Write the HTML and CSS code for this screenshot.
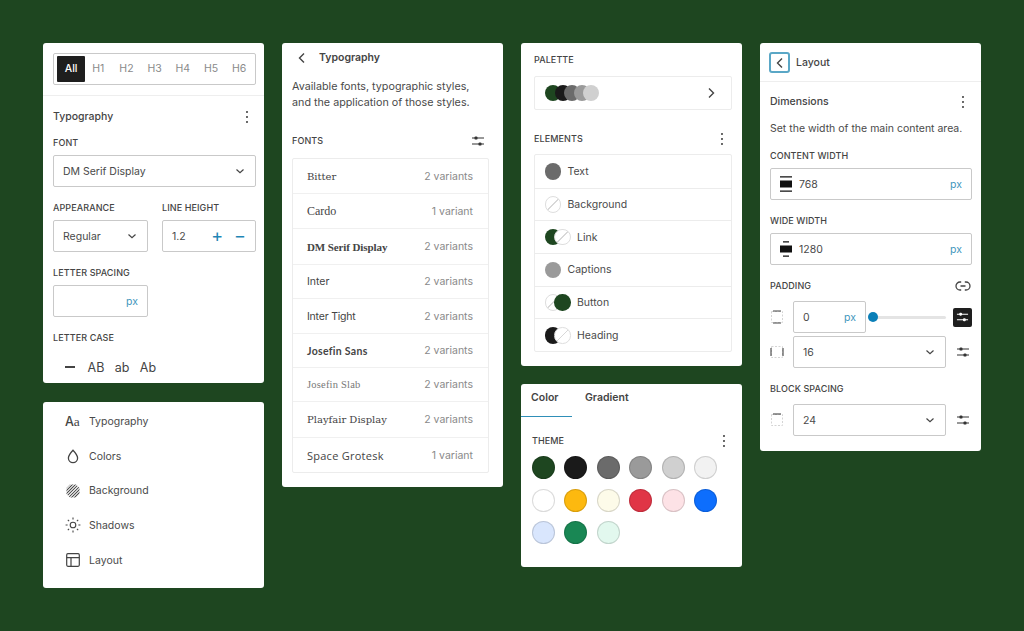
FILE: index.html
```html
<!DOCTYPE html>
<html lang="en">
<head>
<meta charset="utf-8">
<title>Global styles panels</title>
<link rel="stylesheet" href="styles.css">
</head>
<body>
<svg class="defs" aria-hidden="true">
  <symbol id="kebab" viewBox="0 0 16 16"><circle cx="8" cy="3" r="1.050"/><circle cx="8" cy="8" r="1.050"/><circle cx="8" cy="13" r="1.050"/></symbol>
  <symbol id="down" viewBox="0 0 12 12"><path d="M2.5 4.5 6 7.7l3.5-3.2" fill="none" stroke="currentColor" stroke-width="1.2"/></symbol>
  <symbol id="back" viewBox="0 0 12 12"><path d="M8 1.5 3.500 6 8 10.500" fill="none" stroke="currentColor" stroke-width="1.4"/></symbol>
  <symbol id="next" viewBox="0 0 12 12"><path d="M4 1.5 8.500 6 4 10.500" fill="none" stroke="currentColor" stroke-width="1.4"/></symbol>
  <symbol id="sliders" viewBox="0 0 14 12"><path d="M1 3h12M1 9h12" stroke="currentColor" stroke-width="1.200" fill="none"/><rect x="3.500" y="1.400" width="3" height="3.200" rx="1.200" fill="currentColor"/><rect x="7.500" y="7.400" width="3" height="3.200" rx="1.200" fill="currentColor"/></symbol>
  <symbol id="drop" viewBox="0 0 16 16"><path d="M8 2.200S3.400 7 3.400 10.100a4.600 4.600 0 0 0 9.200 0C12.600 7 8 2.200 8 2.200Z" fill="none" stroke="currentColor" stroke-width="1.300"/></symbol>
  <symbol id="hatch" viewBox="0 0 16 16"><clipPath id="hatch-clip"><path d="M5 1.500h6l3.500 3.500v6L11 14.500H5L1.500 11V5Z"/></clipPath><g clip-path="url(#hatch-clip)" stroke="currentColor" stroke-width="1.050"><path d="M-2 5 5-2M-2 8 8-2M-1 10 10-1M0 12 12 0M1 14 14 1M3 15 15 3M5 16 16 5M8 16 16 8"/></g></symbol>
  <symbol id="sun" viewBox="0 0 16 16"><circle cx="8" cy="8" r="2.800" fill="none" stroke="currentColor" stroke-width="1.100"/><path d="M8 .6v2M8 13.400v2M.6 8h2M13.400 8h2M2.800 2.800l1.300 1.300M11.900 11.900l1.300 1.300M2.800 13.200l1.300-1.300M11.900 4.100l1.300-1.300" stroke="currentColor" stroke-width="1.100"/></symbol>
  <symbol id="layout" viewBox="0 0 16 16"><rect x="1.700" y="1.700" width="12.600" height="12.600" rx="1.200" fill="none" stroke="currentColor" stroke-width="1.200"/><path d="M1.700 5.600h12.600M6 5.600v8.700" fill="none" stroke="currentColor" stroke-width="1.200"/></symbol>
  <symbol id="link" viewBox="0 0 16 12"><path d="M6.200 2H5a4 4 0 0 0 0 8h1.200M9.800 2H11a4 4 0 0 1 0 8H9.800M5.500 6h5" fill="none" stroke="currentColor" stroke-width="1.300"/></symbol>
  <symbol id="content" viewBox="0 0 12 16"><path d="M0 .8h12M0 15.200h12" stroke="currentColor" stroke-width="1.200"/><rect y="4.500" width="12" height="7"/></symbol>
  <symbol id="wide" viewBox="0 0 12 16"><path d="M3 .8h6M3 15.200h6" stroke="currentColor" stroke-width="1.200"/><rect y="4.500" width="12" height="7"/></symbol>
  <symbol id="side-tb" viewBox="0 0 14 14"><rect x="1.500" y="1.500" width="11" height="11" fill="none" stroke="#d4d4d4" stroke-dasharray="2 1.500"/><path d="M3 1h8M3 13h8" stroke="#444" stroke-width="1.100"/></symbol>
  <symbol id="side-lr" viewBox="0 0 14 14"><rect x="1.500" y="1.500" width="11" height="11" fill="none" stroke="#d4d4d4" stroke-dasharray="2 1.500"/><path d="M1 3v8M13 3v8" stroke="#444" stroke-width="1.100"/></symbol>
  <symbol id="side-t" viewBox="0 0 14 14"><rect x="1.500" y="1.500" width="11" height="11" fill="none" stroke="#d4d4d4" stroke-dasharray="2 1.500"/><path d="M3 1h8" stroke="#444" stroke-width="1.100"/></symbol>
</svg>

<main class="board">
  <div class="column">
    <section class="panel panel-typography">
      <div class="level-tabs">
        <span class="level level-active">All</span>
        <span class="level">H1</span><span class="level">H2</span><span class="level">H3</span>
        <span class="level">H4</span><span class="level">H5</span><span class="level">H6</span>
      </div>
      <div class="controls controls-typography">
        <div class="title-row"><h2 class="title">Typography</h2><svg class="kebab"><use href="#kebab"/></svg></div>
        <div class="field">
          <div class="label">Font</div>
          <div class="control"><span>DM Serif Display</span><svg class="caret"><use href="#down"/></svg></div>
        </div>
        <div class="field-pair">
          <div class="field">
            <div class="label">Appearance</div>
            <div class="control"><span>Regular</span><svg class="caret"><use href="#down"/></svg></div>
          </div>
          <div class="field">
            <div class="label">Line height</div>
            <div class="control"><span>1.2</span><span class="steppers"><span>+</span><span>−</span></span></div>
          </div>
        </div>
        <div class="field-half">
          <div class="field">
            <div class="label">Letter spacing</div>
            <div class="control control-end"><span class="unit">px</span></div>
          </div>
        </div>
        <div class="field">
          <div class="label">Letter case</div>
          <div class="cases"><span class="case-none"></span><span class="case">AB</span><span class="case">ab</span><span class="case">Ab</span></div>
        </div>
      </div>
    </section>

    <nav class="panel panel-nav">
      <div class="nav-item"><span class="nav-icon nav-aa">A<span class="nav-aa-serif">a</span></span>Typography</div>
      <div class="nav-item"><svg class="nav-icon"><use href="#drop"/></svg>Colors</div>
      <div class="nav-item"><svg class="nav-icon"><use href="#hatch"/></svg>Background</div>
      <div class="nav-item"><svg class="nav-icon"><use href="#sun"/></svg>Shadows</div>
      <div class="nav-item"><svg class="nav-icon"><use href="#layout"/></svg>Layout</div>
    </nav>
  </div>

  <div class="column">
    <section class="panel panel-fonts">
      <div class="fonts-head"><svg class="back-icon"><use href="#back"/></svg><h2 class="title title-strong">Typography</h2></div>
      <p class="description">Available fonts, typographic styles, and the application of those styles.</p>
      <div class="title-row fonts-label"><div class="label">Fonts</div><svg class="sliders"><use href="#sliders"/></svg></div>
      <ul class="font-list">
        <li class="font-row"><span class="f-bitter">Bitter</span><span class="variants">2 variants</span></li>
        <li class="font-row"><span class="f-cardo">Cardo</span><span class="variants">1 variant</span></li>
        <li class="font-row row-tall"><span class="f-dm">DM Serif Display</span><span class="variants">2 variants</span></li>
        <li class="font-row row-short"><span class="f-inter">Inter</span><span class="variants">2 variants</span></li>
        <li class="font-row"><span class="f-tight">Inter Tight</span><span class="variants">2 variants</span></li>
        <li class="font-row row-short"><span class="f-josefin">Josefin Sans</span><span class="variants">2 variants</span></li>
        <li class="font-row row-short"><span class="f-slab">Josefin Slab</span><span class="variants">2 variants</span></li>
        <li class="font-row row-tall"><span class="f-playfair">Playfair Display</span><span class="variants">2 variants</span></li>
        <li class="font-row"><span class="f-space">Space Grotesk</span><span class="variants">1 variant</span></li>
      </ul>
    </section>
  </div>

  <div class="column">
    <section class="panel panel-palette">
      <div class="label">Palette</div>
      <div class="palette-box">
        <span class="stack">
          <i class="dot c-green"></i><i class="dot c-black"></i><i class="dot c-g1"></i><i class="dot c-g2"></i><i class="dot c-g3"></i>
        </span>
        <svg class="next-icon"><use href="#next"/></svg>
      </div>
      <div class="title-row elements-label"><div class="label">Elements</div><svg class="kebab"><use href="#kebab"/></svg></div>
      <ul class="element-list">
        <li class="element"><span class="stack"><i class="dot-solo c-g1"></i></span>Text</li>
        <li class="element"><span class="stack"><i class="dot-solo c-none"></i></span>Background</li>
        <li class="element"><span class="stack"><i class="dot-solo c-green"></i><i class="dot-over c-none"></i></span>Link</li>
        <li class="element"><span class="stack"><i class="dot-solo c-g2"></i></span>Captions</li>
        <li class="element"><span class="stack"><i class="dot-solo c-none"></i><i class="dot-over c-green"></i></span>Button</li>
        <li class="element"><span class="stack"><i class="dot-solo c-black"></i><i class="dot-over c-none"></i></span>Heading</li>
      </ul>
    </section>

    <section class="panel panel-color">
      <div class="color-tabs"><span class="color-tab color-tab-active">Color</span><span class="color-tab">Gradient</span></div>
      <div class="title-row theme-label"><div class="label">Theme</div><svg class="kebab"><use href="#kebab"/></svg></div>
      <div class="swatches">
        <i class="swatch c-green"></i><i class="swatch c-black"></i><i class="swatch c-g1"></i><i class="swatch c-g2"></i><i class="swatch c-g3"></i><i class="swatch c-g4"></i>
        <i class="swatch c-white"></i><i class="swatch c-amber"></i><i class="swatch c-cream"></i><i class="swatch c-red"></i><i class="swatch c-pink"></i><i class="swatch c-blue"></i>
        <i class="swatch c-sky"></i><i class="swatch c-emerald"></i><i class="swatch c-mint"></i>
      </div>
    </section>
  </div>

  <div class="column">
    <section class="panel panel-layout">
      <header class="layout-head"><span class="back-button"><svg class="back-icon"><use href="#back"/></svg></span><h2 class="title">Layout</h2></header>
      <div class="controls controls-layout">
        <div class="title-row"><h2 class="title">Dimensions</h2><svg class="kebab"><use href="#kebab"/></svg></div>
        <p class="hint">Set the width of the main content area.</p>
        <div class="field">
          <div class="label">Content width</div>
          <div class="control"><span class="with-icon"><svg class="size-icon"><use href="#content"/></svg>768</span><span class="unit">px</span></div>
        </div>
        <div class="field">
          <div class="label">Wide width</div>
          <div class="control"><span class="with-icon"><svg class="size-icon"><use href="#wide"/></svg>1280</span><span class="unit">px</span></div>
        </div>
        <div class="field field-wide">
          <div class="title-row"><div class="label">Padding</div><svg class="link-icon"><use href="#link"/></svg></div>
          <div class="side-rows">
            <div class="side-row">
              <svg class="side-icon"><use href="#side-tb"/></svg>
              <div class="control control-small"><span>0</span><span class="unit">px</span></div>
              <div class="range"><span class="range-thumb"></span></div>
              <span class="side-button"><svg class="sliders sliders-small"><use href="#sliders"/></svg></span>
            </div>
            <div class="side-row">
              <svg class="side-icon"><use href="#side-lr"/></svg>
              <div class="control control-grow"><span>16</span><svg class="caret"><use href="#down"/></svg></div>
              <svg class="sliders side-sliders"><use href="#sliders"/></svg>
            </div>
          </div>
        </div>
        <div class="field field-wide">
          <div class="label">Block spacing</div>
          <div class="side-row">
            <svg class="side-icon"><use href="#side-t"/></svg>
            <div class="control control-grow"><span>24</span><svg class="caret"><use href="#down"/></svg></div>
            <svg class="sliders side-sliders"><use href="#sliders"/></svg>
          </div>
        </div>
      </div>
    </section>
  </div>
</main>
</body>
</html>
```

FILE: styles.css
```css
* { box-sizing: border-box; }
html, body { margin: 0; height: 100%; }
body {
  background: #1e4620;
  color: #444;
  font-family: Inter, "Liberation Sans", sans-serif;
  font-size: 10.5px;
  overflow: hidden;
}
.defs { display: block; width: 0; height: 0; overflow: hidden; }
h2, p, ul { margin: 0; padding: 0; }
ul { list-style: none; }
i { display: block; }

.board { display: flex; gap: 18px; padding: 43px 0 0 43px; }
.column { width: 221px; display: flex; flex-direction: column; gap: 18px; }
.panel { background: #fff; border-radius: 3px; }

.title { font-size: 10.5px; font-weight: 500; line-height: 14px; color: #444; }
.title-strong { font-weight: 600; }
.title-row { display: flex; align-items: center; justify-content: space-between; height: 14px; }
.kebab { width: 16px; height: 16px; fill: #444; margin-right: 1px; flex: none; }
.label { font-size: 9px; font-weight: 500; line-height: 12px; letter-spacing: .1px; text-transform: uppercase; color: #444; }
.field { display: flex; flex-direction: column; gap: 6px; }
.field > .label { padding-top: 1px; }

.control {
  height: 32px;
  display: flex;
  align-items: center;
  justify-content: space-between;
  padding: 0 9px 0 9px;
  border: 1.5px solid #c9c9c9;
  border-radius: 2px;
  font-size: 10.5px;
  color: #4a4a4a;
  background: #fff;
}
.control-end { justify-content: flex-end; }
.caret { width: 12px; height: 12px; color: #444; flex: none; }
.unit { color: #3f97bd; font-size: 10.5px; }

/* typography panel */
.panel-typography { height: 340px; }
.level-tabs {
  margin: 10px 8px 0 10px;
  height: 32px;
  display: flex;
  align-items: center;
  padding-left: 3px;
  border: 1.5px solid #c9c9c9;
  border-radius: 2px;
}
.level { width: 28.200px; text-align: center; font-size: 10.5px; color: #8a8a8a; line-height: 26px; }
.level-active { background: #1e1e1e; color: #fff; font-weight: 500; border-radius: 1px; margin-right: -1px; }
.controls {
  display: flex;
  flex-direction: column;
  gap: 14px;
  margin-top: 10px;
  border-top: 1px solid #eee;
  padding: 14px 8px 0 10px;
}
.controls-typography > .title-row { margin-bottom: -2px; }
.field-pair { display: grid; grid-template-columns: 95px 94px; column-gap: 14px; }
.field-half { width: 95px; }
.steppers { display: flex; gap: 11px; color: #1f86b5; font-size: 18px; font-weight: 400; line-height: 20px; }
.cases { display: flex; height: 24px; align-items: center; margin-top: 5px; font-size: 12.500px; color: #444; }
.case { width: 26px; text-align: center; }
.case-none { height: 1.500px; width: 10px; background: #444; margin: 0 8px 0 12px; }

/* navigation panel */
.panel-nav { height: 186px; padding: 2.400px 0 0; margin-top: 1px; display: flex; flex-direction: column; }
.nav-item { height: 34.600px; display: flex; align-items: center; gap: 8px; padding-left: 22px; font-size: 10.5px; color: #4a4a4a; }
.nav-icon { width: 16px; height: 16px; color: #444; flex: none; }
.nav-aa { width: 16px; font-size: 12.500px; font-weight: 500; line-height: 16px; letter-spacing: -.2px; white-space: nowrap; }
.nav-aa-serif { font-family: "Liberation Serif", serif; font-size: 13.500px; }

/* fonts panel */
.panel-fonts { height: 444px; padding: 0 14px 0 10px; }
.fonts-head { height: 28px; display: flex; align-items: center; gap: 11px; padding: 1px 0 0 4px; }
.back-icon { width: 12px; height: 12px; color: #444; flex: none; }
.description { margin-top: 8px; font-size: 10.750px; line-height: 16px; color: #4a4a4a; width: 190px; }
.fonts-label { margin-top: 23px; }
.sliders { width: 14px; height: 12px; color: #333; flex: none; }
.fonts-label .sliders { margin-right: 4px; }
.font-list { margin-top: 10px; border: 1px solid #ececec; border-radius: 2px; }
.font-row {
  height: 35px;
  display: flex;
  align-items: center;
  justify-content: space-between;
  padding: 0 15px 0 14px;
  border-top: 1px solid #f0f0f0;
  font-size: 10.5px;
  color: #444;
}
.font-row:first-child { border-top: 0; height: 34px; }
.row-tall { height: 36px; }
.row-short { height: 34px; }
.variants { color: #8a8a8a; font-family: Inter, sans-serif; font-size: 10.5px; font-weight: 400; letter-spacing: 0; }
.f-bitter { font-family: "DejaVu Serif", serif; font-size: 10px; }
.f-cardo { font-family: "Liberation Serif", serif; font-size: 12px; }
.f-dm { font-family: "Liberation Serif", serif; font-weight: 700; font-size: 11px; letter-spacing: -.1px; }
.f-inter { font-family: Inter, sans-serif; }
.f-tight { font-family: Inter, sans-serif; letter-spacing: -.2px; }
.f-josefin { font-family: Lato, sans-serif; font-weight: 700; font-size: 10.500px; letter-spacing: .3px; }
.f-slab { font-family: "Liberation Serif", serif; font-size: 10.500px; color: #777; letter-spacing: .2px; }
.f-playfair { font-family: "DejaVu Serif", serif; font-weight: 500; font-size: 10px; }
.f-space { font-family: "Open Sans", sans-serif; font-size: 11px; letter-spacing: .25px; }

/* palette panel */
.panel-palette { height: 323px; padding: 11px 10px 0 13px; }
.palette-box {
  margin-top: 10px;
  height: 34px;
  display: flex;
  align-items: center;
  justify-content: space-between;
  padding: 0 14px 0 10px;
  border: 1px solid #ececec;
  border-radius: 2px;
}
.stack { display: flex; flex: none; }
.dot { width: 16px; height: 16px; border-radius: 50%; margin-left: -6.500px; }
.dot:first-child { margin-left: 0; }
.next-icon { width: 12px; height: 12px; color: #444; }
.elements-label { margin-top: 22px; height: 14px; }
.elements-label .kebab { margin-right: 2px; }
.element-list { margin-top: 8px; border: 1px solid #ececec; border-radius: 2px; }
.element {
  height: 32.700px;
  display: flex;
  align-items: center;
  gap: 6.500px;
  padding-left: 9.500px;
  border-top: 1px solid #ececec;
  font-size: 10.5px;
  color: #4a4a4a;
}
.element:first-child { border-top: 0; }
.dot-solo, .dot-over { width: 16.500px; height: 16.500px; border-radius: 50%; }
.dot-over { margin-left: -7px; }
.c-green { background: #1e4620; }
.c-black { background: #1a1a1a; }
.c-g1 { background: #6b6b6b; }
.c-g2 { background: #9a9a9a; }
.c-g3 { background: #d0d0d0; }
.c-g4 { background: #f2f2f2; }
.c-white { background: #fff; }
.c-amber { background: #fdb90f; }
.c-cream { background: #fdfbe9; }
.c-red { background: #e03546; }
.c-pink { background: #fde2e6; }
.c-blue { background: #0d6efd; }
.c-sky { background: #d9e6fd; }
.c-emerald { background: #198754; }
.c-mint { background: #e2f8ee; }
.c-none { background: linear-gradient(135deg, #fff 48%, #d8d8d8 48%, #d8d8d8 52%, #fff 52%); border: 1px solid #dedede; }

/* color panel */
.panel-color { height: 183px; }
.color-tabs { height: 33px; display: flex; }
.color-tab { height: 33px; padding: 7px 0 0 10px; width: 51px; font-size: 10.5px; font-weight: 600; line-height: 14px; color: #444; }
.color-tab + .color-tab { width: auto; padding-left: 13px; }
.color-tab-active { border-bottom: 1.500px solid #2f8fb8; }
.theme-label { margin: 17px 9px 0 11px; }
.swatches {
  margin: 8px 0 0 10.500px;
  display: grid;
  grid-template-columns: repeat(6, 23px);
  gap: 9.500px;
}
.swatch { width: 23px; height: 23px; border-radius: 50%; border: 1px solid rgba(0, 0, 0, .14); }

/* layout panel */
.panel-layout { height: 408px; }
.layout-head { height: 38px; display: flex; align-items: center; gap: 6px; padding: 1px 0 0 9px; }
.back-button {
  width: 21px;
  height: 21px;
  display: flex;
  align-items: center;
  justify-content: center;
  border: 2px solid #5aa7c6;
  border-radius: 3px;
}
.controls-layout { margin-top: 0; padding: 13px 9px 0 10px; }
.controls-layout > .title-row { margin-bottom: -1px; }
.controls-layout .kebab { margin-right: 1px; }
.hint { font-size: 10.5px; line-height: 14px; color: #4a4a4a; margin-bottom: -1px; white-space: nowrap; }
.with-icon { display: flex; align-items: center; gap: 7px; }
.size-icon { width: 12px; height: 16px; fill: #111; color: #111; flex: none; }
.field-wide { gap: 9px; }
.field-wide > .title-row { height: 13px; padding-top: 1px; }
.link-icon { width: 16px; height: 12px; color: #444; margin-right: 1px; }
.side-rows { display: flex; flex-direction: column; gap: 3px; }
.side-row { display: flex; align-items: center; height: 32px; }
.side-icon { width: 14px; height: 14px; flex: none; margin-right: 9px; }
.control-small { width: 73px; flex: none; }
.control-grow { flex: 1; }
.range { flex: 1; height: 3px; margin: 0 0 0 2px; background: #e4e4e4; border-radius: 2px; display: flex; align-items: center; }
.range-thumb { width: 10px; height: 10px; border-radius: 50%; background: #0a7fb8; flex: none; }
.side-button {
  width: 19px;
  height: 19px;
  margin-left: 7px;
  display: flex;
  align-items: center;
  justify-content: center;
  background: #1e1e1e;
  border-radius: 2px;
  flex: none;
}
.sliders-small { color: #fff; width: 13px; }
.side-sliders { margin: 0 2px 0 10px; }
```
